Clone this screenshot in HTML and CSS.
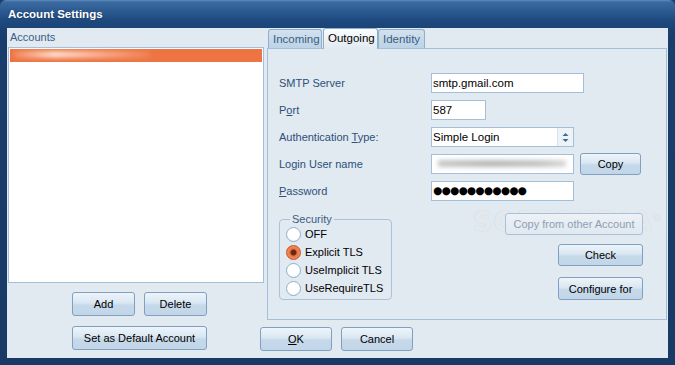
FILE: index.html
```html
<!DOCTYPE html>
<html lang="en">
<head>
  <meta charset="UTF-8" />
  <title>Account Settings</title>
  <link rel="stylesheet" href="styles.css">
</head>
<body>
  <div class="window">
    <div class="titlebar">Account Settings</div>

    <div class="client">
      <!-- Accounts list -->
      <div class="accounts">
        <div class="caption">Accounts</div>
        <div class="account-list">
          <div class="account-item selected"><span class="smudge"></span></div>
        </div>
        <div class="button-row">
          <button class="btn btn-small">Add</button>
          <button class="btn btn-small">Delete</button>
        </div>
        <div class="button-row second">
          <button class="btn btn-wide">Set as Default Account</button>
        </div>
      </div>

      <!-- Server settings -->
      <div class="settings">
        <div class="tabs">
          <div class="tab">Incoming</div>
          <div class="tab active">Outgoing</div>
          <div class="tab">Identity</div>
        </div>

        <div class="tab-panel">
          <div class="watermark">SOFTPEDIA<sup>®</sup></div>

          <div class="form">
            <label>SMTP Server</label>
            <div class="cell"><div class="field w-long">smtp.gmail.com</div></div>

            <label>P<u>o</u>rt</label>
            <div class="cell"><div class="field w-short">587</div></div>

            <label>Authentication <u>T</u>ype:</label>
            <div class="cell">
              <div class="field w-mid combo">
                <span class="combo-text">Simple Login</span>
                <span class="spinner">
                  <svg width="7" height="11" viewBox="0 0 7 11">
                    <path d="M3.5 1 L6.5 4 L0.5 4 Z" fill="#3d6a98" />
                    <path d="M0.5 7 L6.5 7 L3.5 10 Z" fill="#3d6a98" />
                  </svg>
                </span>
              </div>
            </div>

            <label>Login User name</label>
            <div class="cell">
              <div class="field w-mid"><span class="smudge gray"></span></div>
              <button class="btn btn-copy">Copy</button>
            </div>

            <label><u>P</u>assword</label>
            <div class="cell"><div class="field w-mid dots">●●●●●●●●●●●</div></div>
          </div>

          <div class="lower">
            <fieldset class="security">
              <legend>Security</legend>
              <div class="radio"><span class="dot"></span>OFF</div>
              <div class="radio"><span class="dot checked"></span>Explicit TLS</div>
              <div class="radio"><span class="dot"></span>UseImplicit TLS</div>
              <div class="radio"><span class="dot"></span>UseRequireTLS</div>
            </fieldset>

            <div class="side-buttons">
              <button class="btn btn-other" disabled>Copy from other Account</button>
              <button class="btn btn-side check">Check</button>
              <button class="btn btn-side configure">Configure for</button>
            </div>
          </div>
        </div>

        <div class="dialog-buttons">
          <button class="btn btn-dialog"><u>O</u>K</button>
          <button class="btn btn-dialog">Cancel</button>
        </div>
      </div>
    </div>
  </div>
</body>
</html>
```

FILE: styles.css
```css
* {
  box-sizing: border-box;
}
body {
  margin: 0;
  font-family: 'Liberation Sans', Arial, sans-serif;
  font-size: 11px;
  background: #1a3f70;
}
.window {
  width: 675px;
  height: 365px;
  display: flex;
  flex-direction: column;
  background: linear-gradient(#21497c, #1a3d6b 40px, #193a67);
  border-radius: 6px 6px 0 0;
  overflow: hidden;
}
.titlebar {
  height: 28px;
  line-height: 28px;
  padding-left: 8px;
  color: #fff;
  font-weight: bold;
  font-size: 11.5px;
  background: linear-gradient(#5f8cbd 0, #3a6aa0 2px, #2a5990 12px, #1e4a80 20px, #1c4476 28px);
  text-shadow: 0 0 2px rgba(0, 0, 0, 0.4);
}
.client {
  flex: 1;
  margin: 0 7px 7px 7px;
  background: #e1e9f1;
  display: grid;
  grid-template-columns: 256px 1fr;
  column-gap: 3px;
  padding-left: 1px;
  padding-right: 1px;
}

/* accounts column */
.caption {
  height: 19px;
  line-height: 19px;
  padding-left: 2px;
  color: #3b5d85;
}
.account-list {
  height: 236px;
  background: #fff;
  border: 1px solid #a3bfda;
  padding: 1px;
}
.account-item {
  height: 13px;
  position: relative;
}
.account-item.selected {
  background: #ee7443;
}
.smudge {
  display: block;
  position: absolute;
  left: 4px;
  top: 2px;
  width: 136px;
  height: 7px;
  background: linear-gradient(90deg, rgba(255, 220, 200, 0.2), rgba(255, 235, 225, 0.9) 30%, rgba(255, 215, 195, 0.5) 70%, rgba(255, 220, 200, 0.1));
  filter: blur(2px);
}
.smudge.gray {
  left: 6px;
  top: 5px;
  width: 128px;
  height: 7px;
  background: linear-gradient(90deg, #c9c9c9, #b8b8b8 40%, #c4c4c4 80%, #d9d9d9);
}
.button-row {
  display: flex;
  gap: 9px;
  margin-top: 9px;
  padding-left: 64px;
}
.button-row.second {
  margin-top: 10px;
}

/* buttons */
.btn {
  font-family: 'Liberation Sans', Arial, sans-serif;
  font-size: 11px;
  color: #000;
  border: 1px solid #7fa0c1;
  border-radius: 3px;
  background: linear-gradient(#eef4fa, #d9e7f2 45%, #c6d9ea 55%, #c2d6e8);
  padding: 0;
  height: 24px;
  cursor: pointer;
  position: relative;
  z-index: 1;
}
.btn-small {
  width: 63px;
}
.btn-wide {
  width: 135px;
}
.btn-copy {
  width: 61px;
  height: 22px;
  margin-left: 6px;
}
.btn-other {
  width: 138px;
  height: 22px;
  color: #8e9fb2;
  background: linear-gradient(rgba(238, 243, 248, 0.9), rgba(223, 232, 241, 0.9));
  border-color: #a9c0d6;
}
.btn-side {
  width: 85px;
  height: 22px;
}
.btn-side.check {
  margin-top: 9px;
}
.btn-side.configure {
  margin-top: 11px;
  height: 23px;
}
.btn-dialog {
  width: 72px;
}

/* settings column */
.settings {
  display: flex;
  flex-direction: column;
}
.tabs {
  height: 21px;
  display: flex;
  align-items: flex-end;
  margin-left: 1px;
  margin-bottom: -1px;
}
.tab {
  height: 20px;
  line-height: 18px;
  padding: 0 4px;
  font-size: 11.5px;
  color: #3b5d85;
  border: 1px solid #8fb0cd;
  border-bottom: none;
  border-radius: 3px 3px 0 0;
  background: linear-gradient(#d2e1ee, #bcd2e4);
}
.tab:first-child {
  width: 54px;
}
.tab.active {
  height: 21px;
  width: 55px;
  line-height: 19px;
  color: #000;
  background: linear-gradient(#fafcfe, #e1e9f1);
  position: relative;
  z-index: 1;
  margin: 0 0 0 1px;
}
.tab:last-child {
  width: 47px;
}
.tab-panel {
  height: 272px;
  border: 1px solid #a3bfda;
  background: #e1e9f1;
  padding-left: 11px;
  position: relative;
}
.form {
  display: grid;
  grid-template-columns: 152px auto;
  grid-auto-rows: 20px;
  row-gap: 7px;
  padding-top: 24px;
}
.form label {
  line-height: 20px;
  color: #2c5079;
}
.cell {
  display: flex;
  align-items: center;
}
.field {
  height: 20px;
  line-height: 18px;
  border: 1px solid #a3bfda;
  background: #fff;
  padding: 0 1px;
  font-size: 11.5px;
  position: relative;
}
.w-long {
  width: 153px;
}
.w-short {
  width: 55px;
}
.w-mid {
  width: 143px;
}
.combo {
  display: flex;
  padding-right: 0;
}
.combo-text {
  flex: 1;
}
.spinner {
  width: 16px;
  border-left: 1px solid #d6e2ee;
  background: #eef3f8;
  display: flex;
  align-items: center;
  justify-content: center;
}
.dots {
  font-family: 'DejaVu Sans', sans-serif;
  font-size: 10.5px;
  letter-spacing: -0.7px;
  line-height: 17px;
}

/* lower part of the panel */
.lower {
  display: flex;
  justify-content: space-between;
  align-items: flex-start;
  margin-top: 12px;
  padding-right: 23px;
}
.security {
  width: 113px;
  height: 87px;
  margin: 0;
  padding: 0 4px 2px 6px;
  border: 1px solid #a9c2da;
  border-radius: 4px;
}
.security legend {
  padding: 0 2px;
  margin-left: 4px;
  color: #3b5d85;
  line-height: 13px;
}
.radio {
  height: 18px;
  display: flex;
  align-items: center;
  gap: 4px;
  color: #000;
}
.radio:first-of-type {
  margin-top: -1px;
}
.dot {
  width: 15px;
  height: 15px;
  border-radius: 50%;
  border: 1px solid #8fb0cd;
  background: radial-gradient(circle at 50% 40%, #fff 55%, #e6eef6);
  flex-shrink: 0;
}
.dot.checked {
  border-color: #c7552a;
  background: radial-gradient(circle, #6a2812 0, #6a2812 2.5px, #e8703f 3.5px, #f08a5c 6px, #e46a3a 7px);
}
.side-buttons {
  display: flex;
  flex-direction: column;
  align-items: flex-end;
}
.watermark {
  position: absolute;
  left: 205px;
  top: 157px;
  font-family: 'DejaVu Sans', sans-serif;
  font-weight: bold;
  font-size: 27px;
  letter-spacing: 1px;
  color: rgba(255, 255, 255, 0.6);
  text-shadow: 0 0 1px rgba(120, 140, 160, 0.35);
  pointer-events: none;
}
.watermark sup {
  font-size: 9px;
}
.dialog-buttons {
  display: flex;
  gap: 9px;
  margin-top: 7px;
  margin-left: -7px;
}
```
